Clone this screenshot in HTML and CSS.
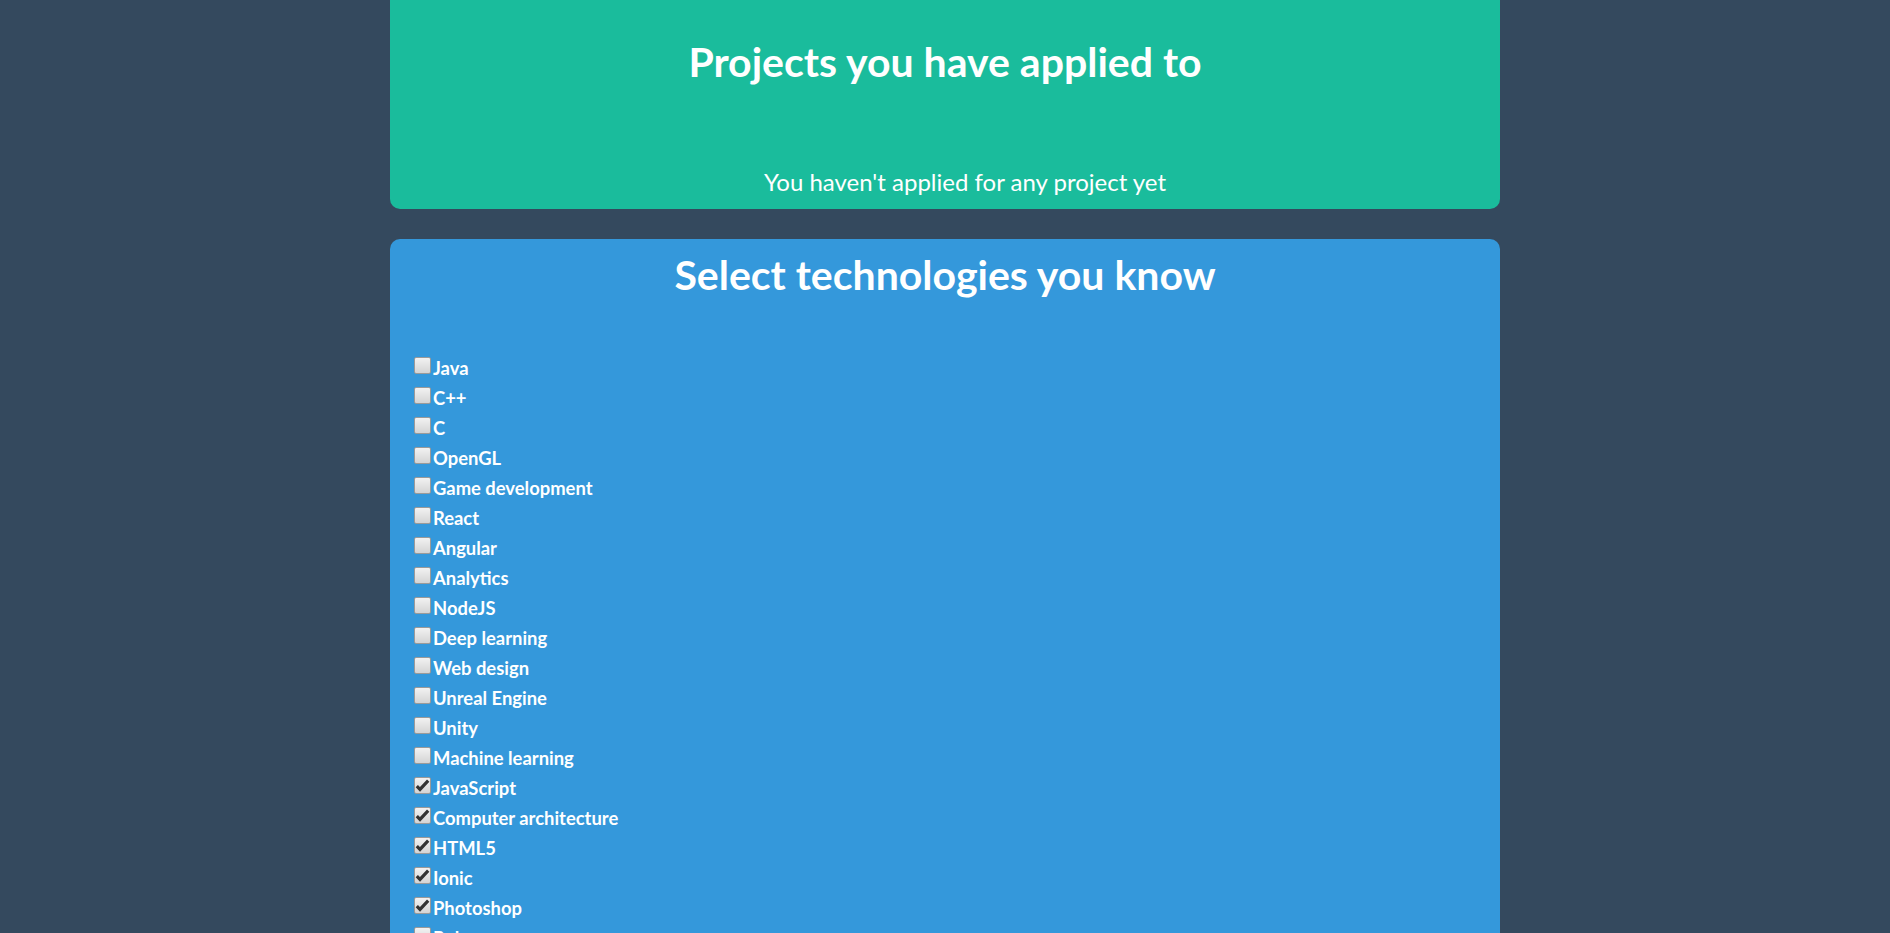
FILE: index.html
```html
<!DOCTYPE html>
<html lang="en">
<head>
<meta charset="utf-8">
<title>Projects</title>
<link rel="stylesheet" href="styles.css">
</head>
<body>
<main class="wrap">
  <section class="card card-green">
    <h1 class="card-title">Projects you have applied to</h1>
    <p class="empty">You haven't applied for any project yet</p>
  </section>
  <section class="card card-blue">
    <h2 class="card-title">Select technologies you know</h2>
    <div class="tech-list">
      <label class="tech"><input type="checkbox">Java</label>
      <label class="tech"><input type="checkbox">C++</label>
      <label class="tech"><input type="checkbox">C</label>
      <label class="tech"><input type="checkbox">OpenGL</label>
      <label class="tech"><input type="checkbox">Game development</label>
      <label class="tech"><input type="checkbox">React</label>
      <label class="tech"><input type="checkbox">Angular</label>
      <label class="tech"><input type="checkbox">Analytics</label>
      <label class="tech"><input type="checkbox">NodeJS</label>
      <label class="tech"><input type="checkbox">Deep learning</label>
      <label class="tech"><input type="checkbox">Web design</label>
      <label class="tech"><input type="checkbox">Unreal Engine</label>
      <label class="tech"><input type="checkbox">Unity</label>
      <label class="tech"><input type="checkbox">Machine learning</label>
      <label class="tech"><input type="checkbox" checked>JavaScript</label>
      <label class="tech"><input type="checkbox" checked>Computer architecture</label>
      <label class="tech"><input type="checkbox" checked>HTML5</label>
      <label class="tech"><input type="checkbox" checked>Ionic</label>
      <label class="tech"><input type="checkbox" checked>Photoshop</label>
      <label class="tech"><input type="checkbox">Ruby</label>
      <label class="tech"><input type="checkbox">Python</label>
    </div>
  </section>
</main>
</body>
</html>
```
FILE: styles.css
```css
html, body {
  margin: 0;
  padding: 0;
}
body {
  background: #34495e;
  font-family: Lato, "Open Sans", sans-serif;
  color: #ffffff;
}
.wrap {
  width: 1110px;
  margin: -12px auto 0;
  display: flex;
  flex-direction: column;
  gap: 30px;
}
.card {
  border-radius: 10px;
  padding: 0 24px;
}
.card-green {
  background: #1abc9c;
  padding-top: 49px;
  padding-bottom: 13px;
  text-align: center;
}
.card-blue {
  background: #3498db;
  padding-top: 11px;
  padding-bottom: 40px;
}
.card-title {
  margin: 0;
  font-size: 41px;
  line-height: 50px;
  font-weight: 700;
  text-align: center;
}
.empty {
  margin: 80px 0 0;
  padding-left: 40px;
  font-size: 24px;
  line-height: 29px;
  font-weight: 400;
}
.tech-list {
  margin-top: 53px;
  display: flex;
  flex-direction: column;
}
.tech {
  display: block;
  font-size: 18.4px;
  line-height: 30px;
  font-weight: 700;
}
.tech input {
  -webkit-appearance: none;
  appearance: none;
  width: 17px;
  height: 17px;
  margin: 0 2px 1px 0;
  box-sizing: border-box;
  border: 1px solid #9a9a9a;
  border-radius: 2px;
  background: linear-gradient(#f2f2f2, #d4d4d4);
  vertical-align: baseline;
}
.tech input:checked {
  background-image: url("data:image/svg+xml;utf8,<svg xmlns='http://www.w3.org/2000/svg' width='15' height='15' viewBox='0 0 15 15'><path d='M1.8 8.2 L5 11.4 L13.2 2.6' fill='none' stroke='%23333333' stroke-width='3.2' stroke-linejoin='miter'/></svg>"), linear-gradient(#f2f2f2, #d4d4d4);
  background-repeat: no-repeat;
  background-position: center;
}
```
